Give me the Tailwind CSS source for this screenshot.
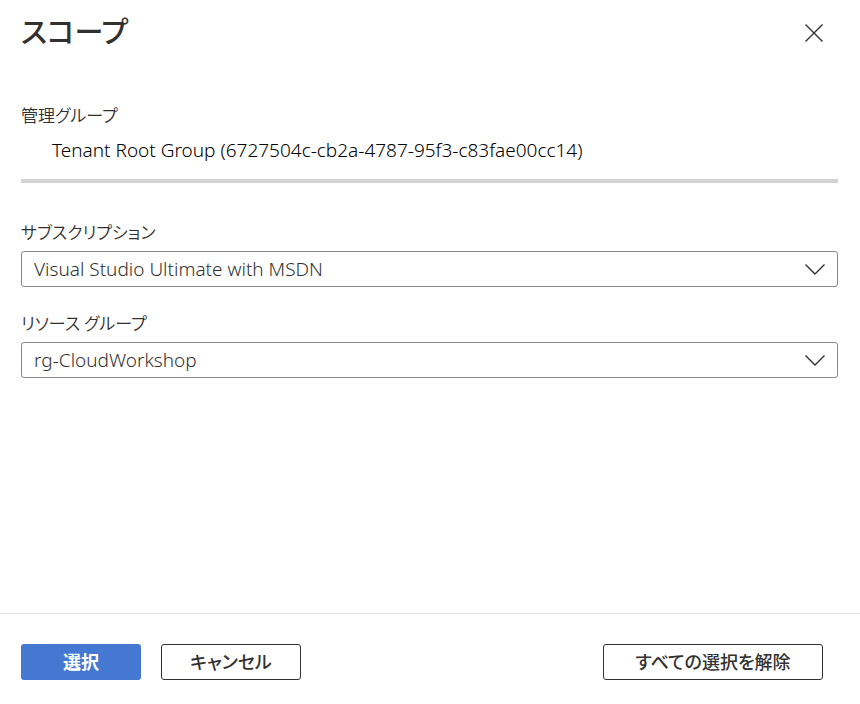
<!DOCTYPE html>
<html lang="ja">
<head>
<meta charset="utf-8">
<meta name="viewport" content="width=device-width, initial-scale=1">
<title>スコープ</title>
<script src="https://cdn.jsdelivr.net/npm/@tailwindcss/browser@4"></script>
</head>
<body class="bg-white text-[#323130] font-['Noto_Sans','Noto_Sans_CJK_JP',sans-serif] [font-feature-settings:'palt']">
<div class="flex min-h-screen flex-col">
  <header class="flex items-start justify-between pt-[6px] pr-8 pl-[21px]">
    <h1 class="text-[29px] leading-12 font-medium font-['Noto_Sans_CJK_JP',sans-serif]">スコープ</h1>
    <button type="button" aria-label="閉じる" class="mt-[13px] flex size-7 items-center justify-center">
      <svg class="size-5" viewBox="0 0 20 20" fill="none" stroke="#323130" stroke-width="1.4"><path d="M1.500 1.500l17 17M18.500 1.500l-17 17"/></svg>
    </button>
  </header>
  <main class="flex-1 pt-[47px] pr-[22px] pl-[21px]">
    <section>
      <h2 class="text-[17px] leading-7 font-[350] font-['Noto_Sans_CJK_JP',sans-serif]">管理グループ</h2>
      <p class="mt-[7px] pl-[31px] text-[19px] leading-7 font-light text-black">Tenant Root Group (6727504c-cb2a-4787-95f3-c83fae00cc14)</p>
      <hr class="mt-[15px] border-0 border-t-4 border-[#d2d2d2]">
    </section>
    <div class="mt-[35px]">
      <label for="sub" class="block text-[17px] leading-7 font-[350] font-['Noto_Sans_CJK_JP',sans-serif]">サブスクリプション</label>
      <div class="relative mt-[5px]">
        <select id="sub" class="block h-9 w-full appearance-none rounded-[3px] border border-[#8a8886] bg-white pr-10 pl-3 text-[19px] font-light"><option>Visual Studio Ultimate with MSDN</option></select>
        <svg class="pointer-events-none absolute top-3 right-[13px] h-3 w-5" viewBox="0 0 20 12" fill="none" stroke="#323130" stroke-width="1.4"><path d="M.5 1.500l9.500 9.500L19.500 1.500"/></svg>
      </div>
    </div>
    <div class="mt-[22px]">
      <label for="rg" class="block text-[17px] leading-7 font-[350] font-['Noto_Sans_CJK_JP',sans-serif]">リソース グループ</label>
      <div class="relative mt-[5px]">
        <select id="rg" class="block h-9 w-full appearance-none rounded-[3px] border border-[#8a8886] bg-white pr-10 pl-3 text-[19px] font-light"><option>rg-CloudWorkshop</option></select>
        <svg class="pointer-events-none absolute top-3 right-[13px] h-3 w-5" viewBox="0 0 20 12" fill="none" stroke="#323130" stroke-width="1.4"><path d="M.5 1.500l9.500 9.500L19.500 1.500"/></svg>
      </div>
    </div>
  </main>
  <footer class="flex gap-5 border-t border-[#e1dfdd] pt-[30px] pr-[37px] pb-6 pl-[21px] text-[18px] leading-7 font-medium font-['Noto_Sans_CJK_JP',sans-serif]">
    <button type="button" class="h-9 w-30 rounded-[3px] bg-[#4478d1] pb-[2px] font-bold text-white">選択</button>
    <button type="button" class="h-9 w-35 rounded-[3px] border border-[#323130] pb-[2px]">キャンセル</button>
    <button type="button" class="ml-auto h-9 w-55 rounded-[3px] border border-[#323130] pb-[2px]">すべての選択を解除</button>
  </footer>
</div>
</body>
</html>
